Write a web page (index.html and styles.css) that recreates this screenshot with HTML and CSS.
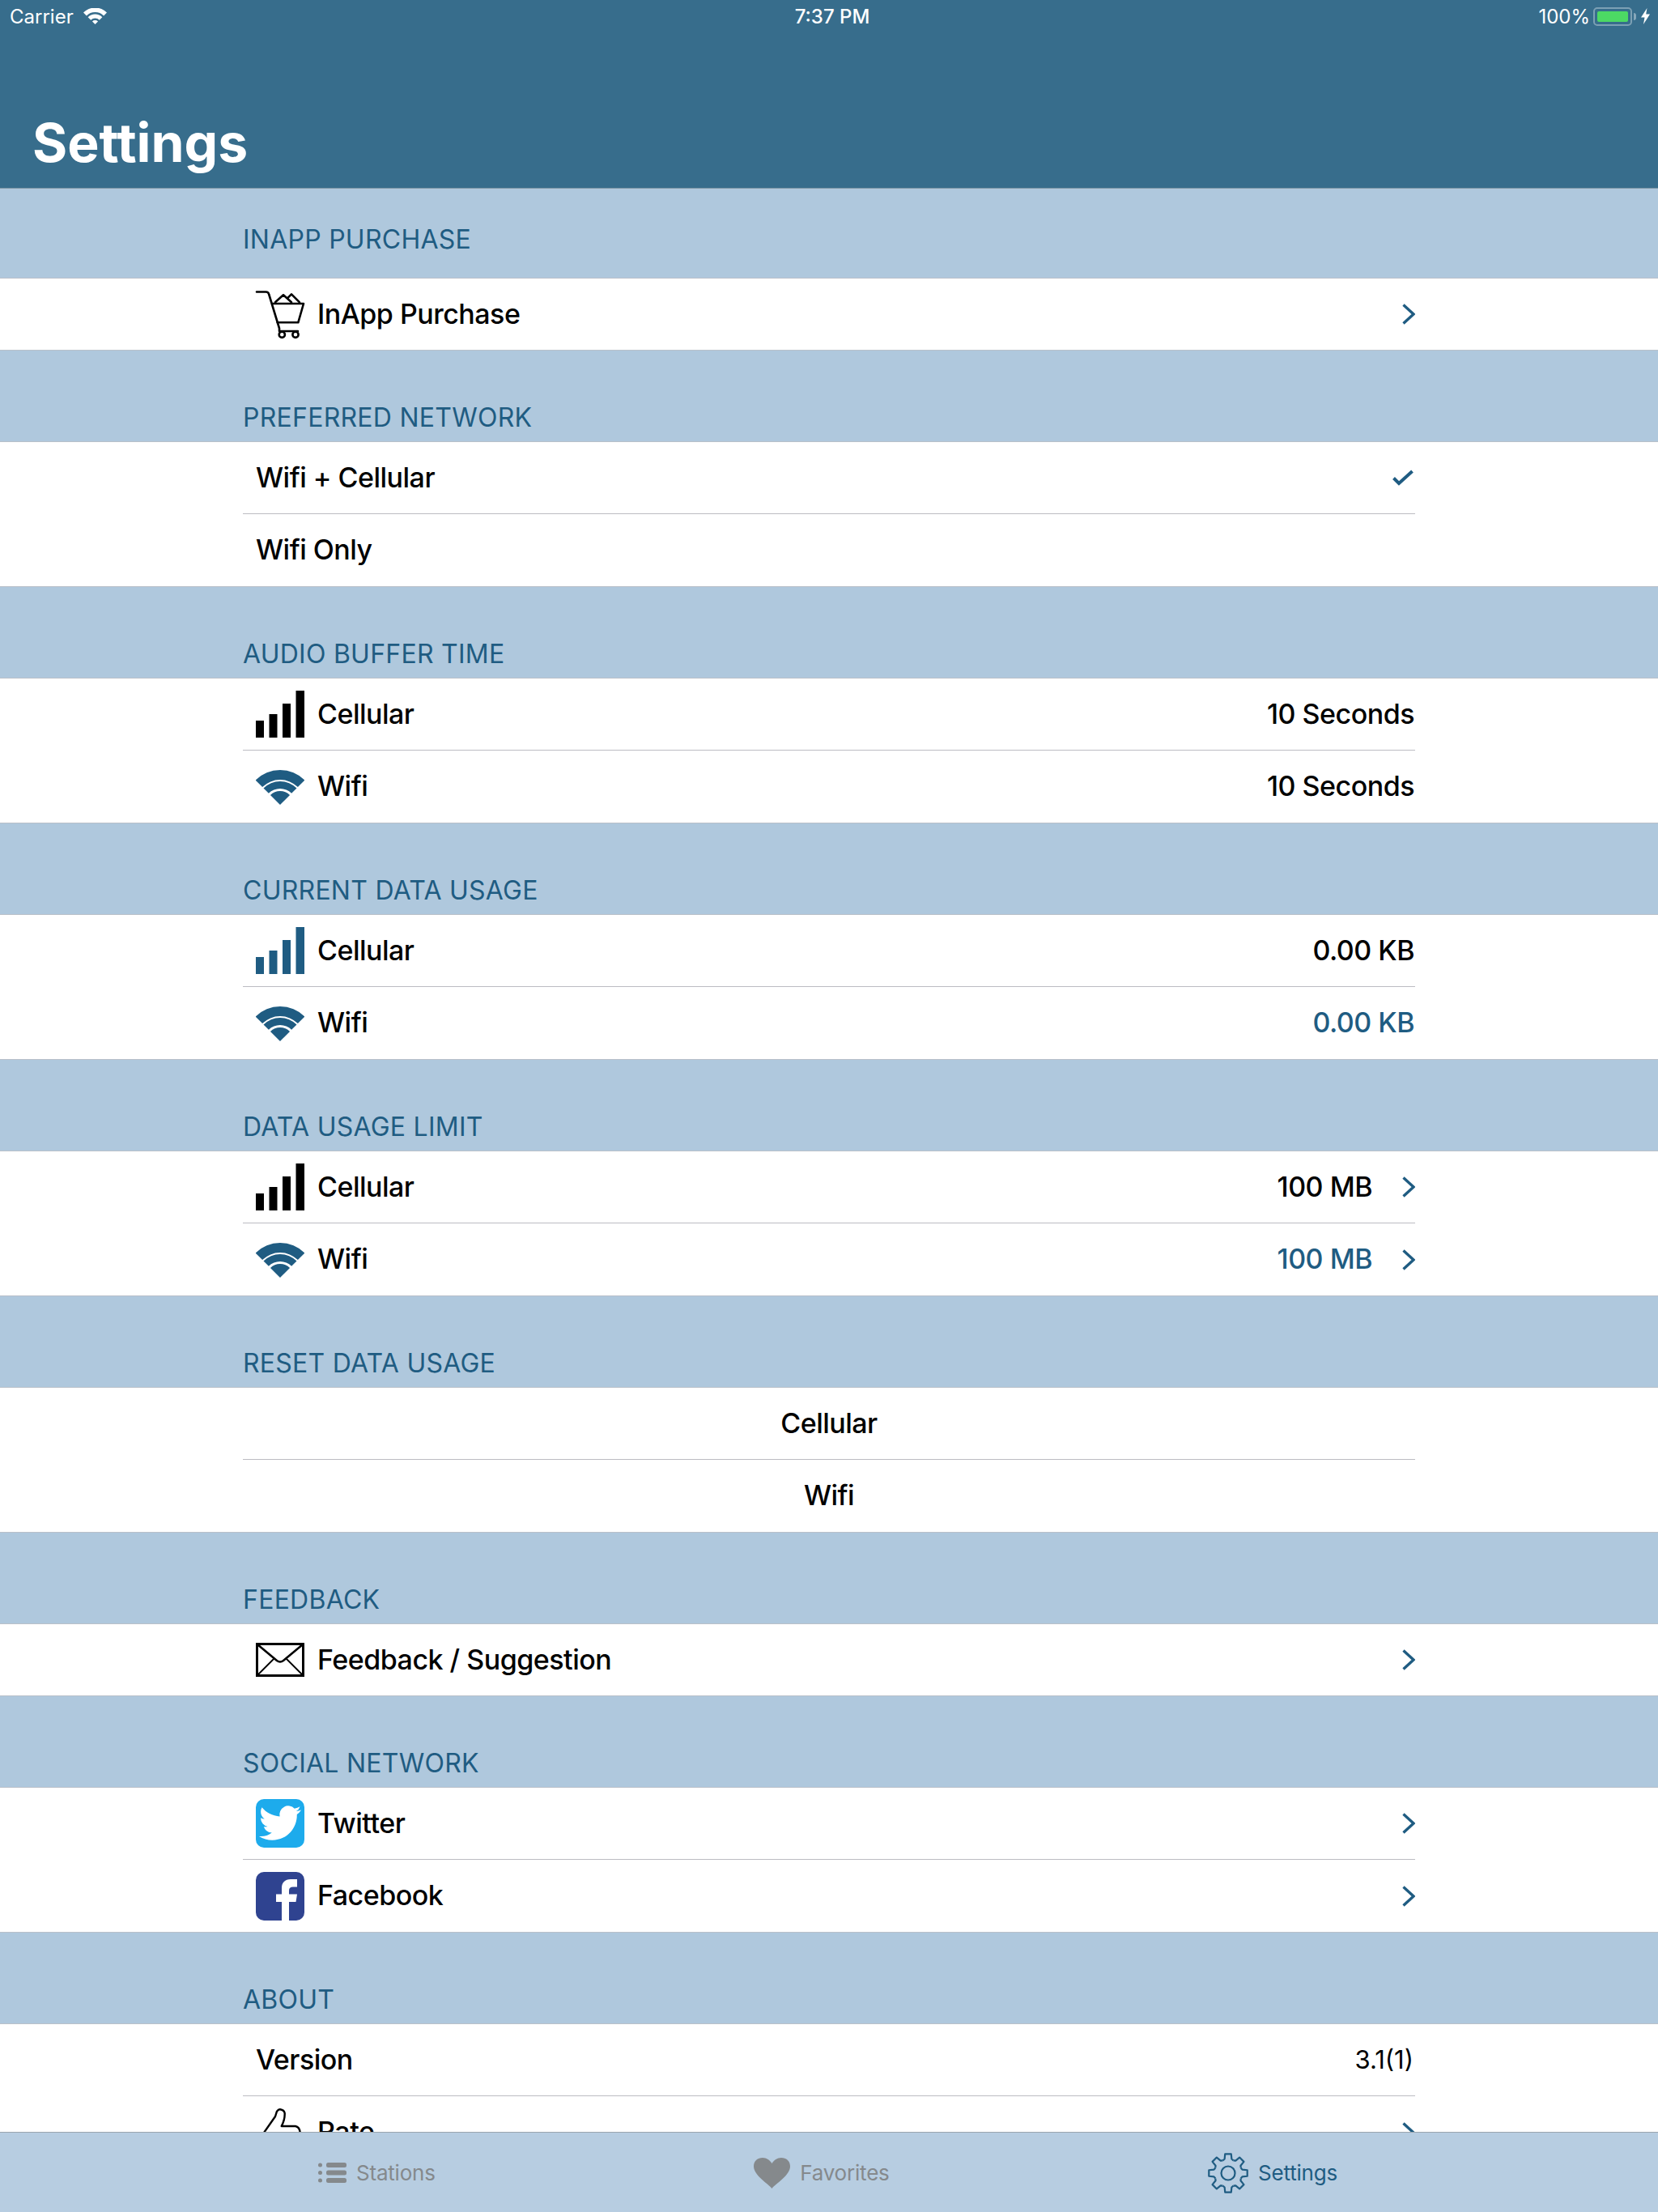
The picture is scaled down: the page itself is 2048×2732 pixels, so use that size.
FILE: index.html
```html
<!DOCTYPE html>
<html lang="en">
<head>
<meta charset="utf-8">
<title>Settings</title>
<link rel="stylesheet" href="styles.css">
</head>
<body>
<svg class="sprite" aria-hidden="true">
  <symbol id="i-chevron" viewBox="0 0 16 26"><path d="M1.5 1.5 L14 13 L1.5 24.5" fill="none" stroke="currentColor" stroke-width="3.4"/></symbol>
  <symbol id="i-bars" viewBox="0 0 60 60"><path fill="currentColor" d="M0 38h10v21H0zM16.5 30h10v29h-10zM33 17h10v42H33zM49.5 1H60v58H49.5z"/></symbol>
  <symbol id="i-wifi" viewBox="0 0 60 60"><path fill="currentColor" d="M-0.4 21.6A43 43 0 0 1 60.4 21.6L51.9 30.1A31 31 0 0 0 8.1 30.1ZM9.5 31.5A29 29 0 0 1 50.5 31.5L44.14 37.86A20 20 0 0 0 15.86 37.86ZM17.98 39.98A17 17 0 0 1 42.02 39.98L30 52Z"/></symbol>
</svg>

<div class="page">
  <header class="topbar">
    <div class="status">
      <div class="status-left">
        <span>Carrier</span>
        <svg class="status-wifi" viewBox="0 0 29 20"><path fill="currentColor" d="M0 5.5A20.5 20.5 0 0 1 29 5.5L25.1 9.4A15 15 0 0 0 3.9 9.4ZM5.66 11.16A12.5 12.5 0 0 1 23.34 11.16L19.8 14.7A7.5 7.5 0 0 0 9.2 14.7ZM10.96 16.46A5 5 0 0 1 18.04 16.46L14.5 20Z"/></svg>
      </div>
      <div class="status-time">7:37 PM</div>
      <div class="status-right">
        <span>100%</span>
        <div class="battery"><div class="battery-fill"></div></div>
        <div class="battery-nub"></div>
        <svg class="bolt" viewBox="0 0 11 20"><path fill="currentColor" d="M7.5 0L0 11.5H4.5L3 20L11 7.5H6.2Z"/></svg>
      </div>
    </div>
    <h1 class="title">Settings</h1>
  </header>

  <main class="content">
    <section>
      <h2 class="head head-first"><span>INAPP PURCHASE</span></h2>
      <div class="group">
        <div class="row">
          <svg class="icon" viewBox="0 0 60 60" fill="none" stroke="#000" stroke-width="2.6" stroke-linejoin="round" stroke-linecap="round">
            <path d="M1 2.5H12.5Q15.5 2.5 16.2 5.5L29 47.5V51H52"/>
            <path d="M20.7 17H59L52.3 40.3H26.7"/>
            <path d="M24 15.3L34 6.3L44 15.3M39 10.3L44 5.3L54 15.3"/>
            <circle cx="32.3" cy="55.3" r="3.6"/><circle cx="49" cy="55.3" r="3.6"/>
          </svg>
          <span class="label">InApp Purchase</span>
          <svg class="chevron"><use href="#i-chevron"/></svg>
        </div>
      </div>
    </section>

    <section>
      <h2 class="head"><span>PREFERRED NETWORK</span></h2>
      <div class="group">
        <div class="row">
          <span class="label">Wifi + Cellular</span>
          <svg class="check" viewBox="0 0 26 20"><path d="M1.5 10.5L8 17L24.5 2" fill="none" stroke="currentColor" stroke-width="4"/></svg>
        </div>
        <div class="row row-last"><span class="label">Wifi Only</span></div>
      </div>
    </section>

    <section>
      <h2 class="head"><span>AUDIO BUFFER TIME</span></h2>
      <div class="group">
        <div class="row">
          <svg class="icon black"><use href="#i-bars"/></svg>
          <span class="label">Cellular</span>
          <span class="value">10 Seconds</span>
        </div>
        <div class="row row-last">
          <svg class="icon teal"><use href="#i-wifi"/></svg>
          <span class="label">Wifi</span>
          <span class="value">10 Seconds</span>
        </div>
      </div>
    </section>

    <section>
      <h2 class="head"><span>CURRENT DATA USAGE</span></h2>
      <div class="group">
        <div class="row">
          <svg class="icon teal"><use href="#i-bars"/></svg>
          <span class="label">Cellular</span>
          <span class="value">0.00 KB</span>
        </div>
        <div class="row row-last">
          <svg class="icon teal"><use href="#i-wifi"/></svg>
          <span class="label">Wifi</span>
          <span class="value teal">0.00 KB</span>
        </div>
      </div>
    </section>

    <section>
      <h2 class="head"><span>DATA USAGE LIMIT</span></h2>
      <div class="group">
        <div class="row">
          <svg class="icon black"><use href="#i-bars"/></svg>
          <span class="label">Cellular</span>
          <span class="value">100 MB</span>
          <svg class="chevron chevron-after"><use href="#i-chevron"/></svg>
        </div>
        <div class="row row-last">
          <svg class="icon teal"><use href="#i-wifi"/></svg>
          <span class="label">Wifi</span>
          <span class="value teal">100 MB</span>
          <svg class="chevron chevron-after"><use href="#i-chevron"/></svg>
        </div>
      </div>
    </section>

    <section>
      <h2 class="head"><span>RESET DATA USAGE</span></h2>
      <div class="group">
        <div class="row row-center"><span class="label">Cellular</span></div>
        <div class="row row-center row-last"><span class="label">Wifi</span></div>
      </div>
    </section>

    <section>
      <h2 class="head"><span>FEEDBACK</span></h2>
      <div class="group">
        <div class="row">
          <svg class="icon" viewBox="0 0 60 60" fill="none" stroke="#000">
            <rect x="1.5" y="10.5" width="57" height="39" stroke-width="3"/>
            <path stroke-width="2.6" d="M2 11L26 31Q30 34 34 31L58 11"/>
            <path stroke-width="1.8" d="M2 49L23 28M58 49L37 28"/>
          </svg>
          <span class="label">Feedback / Suggestion</span>
          <svg class="chevron"><use href="#i-chevron"/></svg>
        </div>
      </div>
    </section>

    <section>
      <h2 class="head"><span>SOCIAL NETWORK</span></h2>
      <div class="group">
        <div class="row">
          <svg class="icon" viewBox="0 0 60 60">
            <rect width="60" height="60" rx="10" fill="#1DABEC"/>
            <path transform="translate(4 3.5) scale(2.17)" fill="#fff" d="M23.953 4.57a10 10 0 01-2.825.775 4.958 4.958 0 002.163-2.723c-.951.555-2.005.959-3.127 1.184a4.92 4.92 0 00-8.384 4.482C7.69 8.095 4.067 6.13 1.64 3.162a4.822 4.822 0 00-.666 2.475c0 1.71.87 3.213 2.188 4.096a4.904 4.904 0 01-2.228-.616v.06a4.923 4.923 0 003.946 4.827 4.996 4.996 0 01-2.212.085 4.936 4.936 0 004.604 3.417 9.867 9.867 0 01-6.102 2.105c-.39 0-.779-.023-1.17-.067a13.995 13.995 0 007.557 2.209c9.053 0 13.998-7.496 13.998-13.985 0-.21 0-.42-.015-.63A9.935 9.935 0 0024 4.59z"/>
          </svg>
          <span class="label">Twitter</span>
          <svg class="chevron"><use href="#i-chevron"/></svg>
        </div>
        <div class="row row-last">
          <svg class="icon" viewBox="0 0 60 60">
            <rect width="60" height="60" rx="10" fill="#2F4390"/>
            <path fill="#fff" d="M32 60V37H25V27.5H32V20C32 13 36 9 43 9H51V18.5H46C42.5 18.5 41 20 41 23V27.5H51L49.5 37H41V60Z"/>
          </svg>
          <span class="label">Facebook</span>
          <svg class="chevron"><use href="#i-chevron"/></svg>
        </div>
      </div>
    </section>

    <section>
      <h2 class="head"><span>ABOUT</span></h2>
      <div class="group">
        <div class="row">
          <span class="label">Version</span>
          <span class="value value-small">3.1(1)</span>
        </div>
        <div class="row row-last">
          <svg class="icon" viewBox="0 0 60 60" fill="none" stroke="#000" stroke-width="2.4" stroke-linejoin="round">
            <path d="M10 30L24 10L26 3.7Q28 1 30 1.3Q35 2 35.7 6Q36 14 31.7 22L49 22Q54 23 54.7 30Q55 35 52 37Q55 42 50 46Q51 51 46 53Q46 58 40 58H22Q14 56 6 52V40Q7 36 10 30Z"/>
          </svg>
          <span class="label">Rate</span>
          <svg class="chevron"><use href="#i-chevron"/></svg>
        </div>
      </div>
    </section>
  </main>

  <nav class="tabbar">
    <div class="tab">
      <svg class="tab-list" viewBox="0 0 35 25"><path fill="currentColor" d="M2.5 0.5a2.5 2.5 0 1 1 0 5a2.5 2.5 0 0 1 0-5zM2.5 10a2.5 2.5 0 1 1 0 5a2.5 2.5 0 0 1 0-5zM2.5 19.5a2.5 2.5 0 1 1 0 5a2.5 2.5 0 0 1 0-5z"/><rect x="10" y="0" width="25" height="6" rx="2.5" fill="currentColor"/><rect x="10" y="9.5" width="25" height="6" rx="2.5" fill="currentColor"/><rect x="10" y="19" width="25" height="6" rx="2.5" fill="currentColor"/></svg>
      <span>Stations</span>
    </div>
    <div class="tab">
      <svg class="tab-heart" viewBox="0 0 45 38"><path fill="currentColor" d="M22.5 38C18 32 0 22 0 10.5C0 4 5 0 11 0C16 0 20 3 22.5 7C25 3 29 0 34 0C40 0 45 4 45 10.5C45 22 27 32 22.5 38Z"/></svg>
      <span>Favorites</span>
    </div>
    <div class="tab tab-active">
      <svg class="tab-gear" viewBox="-25 -25 50 50">
        <defs><path id="gear-seg" d="M-6.5 -15.7L-4.35 -17.5L-3.75 -23.7L3.75 -23.7L4.35 -17.5L6.5 -15.7"/></defs>
        <g fill="none" stroke="currentColor" stroke-width="2.2" stroke-linejoin="round">
          <use href="#gear-seg"/>
          <use href="#gear-seg" transform="rotate(45)"/>
          <use href="#gear-seg" transform="rotate(90)"/>
          <use href="#gear-seg" transform="rotate(135)"/>
          <use href="#gear-seg" transform="rotate(180)"/>
          <use href="#gear-seg" transform="rotate(225)"/>
          <use href="#gear-seg" transform="rotate(270)"/>
          <use href="#gear-seg" transform="rotate(315)"/>
          <circle r="8.5"/>
        </g>
      </svg>
      <span>Settings</span>
    </div>
  </nav>
</div>
</body>
</html>
```
FILE: styles.css
```css
* { box-sizing: border-box; }

html, body {
  margin: 0;
  padding: 0;
}

body {
  font-family: Inter, "Liberation Sans", sans-serif;
  color: #000;
  background: #fff;
}

.sprite {
  display: none;
}

.page {
  width: 2048px;
  height: 2732px;
  display: flex;
  flex-direction: column;
  overflow: hidden;
}

/* Top bar */
.topbar {
  flex: none;
  height: 233px;
  background: #376D8C;
  border-bottom: 1px solid #7d97a6;
  color: #fff;
  display: flex;
  flex-direction: column;
}

.status {
  height: 40px;
  padding: 0 10px 0 12px;
  display: grid;
  grid-template-columns: 1fr auto 1fr;
  align-items: center;
  font-size: 24px;
}

.status-left {
  display: flex;
  align-items: center;
  gap: 12px;
}

.status-wifi {
  width: 29px;
  height: 20px;
  display: block;
}

.status-time {
  font-weight: 500;
  padding-left: 6px;
}

.status-right {
  display: flex;
  align-items: center;
  justify-content: flex-end;
}

.battery {
  width: 48px;
  height: 23px;
  margin-left: 4px;
  padding: 3px;
  border: 2px solid rgba(255, 255, 255, 0.35);
  border-radius: 5px;
}

.battery-fill {
  height: 100%;
  background: #4CD964;
  border-radius: 2px;
}

.battery-nub {
  width: 3px;
  height: 9px;
  margin-left: 2px;
  background: rgba(255, 255, 255, 0.4);
  border-radius: 0 3px 3px 0;
}

.bolt {
  width: 11px;
  height: 20px;
  margin-left: 6px;
  display: block;
}

.title {
  margin: 0;
  padding: 95px 0 0 40px;
  font-size: 66px;
  font-weight: 700;
  line-height: 82px;
}

/* Scrolling list */
.content {
  flex: 1;
  min-height: 0;
  overflow: hidden;
  background: #AFC8DD;
}

.head {
  margin: 0;
  height: 112px;
  padding: 0 300px 9px;
  display: flex;
  align-items: flex-end;
  font-size: 32px;
  font-weight: 400;
  line-height: 40px;
  letter-spacing: 0.25px;
  color: #1F5C82;
}

.head-first {
  height: 110px;
  padding-bottom: 27px;
}

.group {
  background: #fff;
  border-top: 1px solid #b9c0c9;
  border-bottom: 1px solid #b9c0c9;
}

.row {
  height: 89px;
  margin: 0 300px;
  padding: 0 0 0 16px;
  border-bottom: 1px solid #bcbcc2;
  display: flex;
  align-items: center;
  font-size: 34px;
  font-weight: 550;
  letter-spacing: -0.5px;
}

.row-last {
  border-bottom: 0;
}

.row:only-child {
  height: 88px;
  border-bottom: 0;
}

.row-center {
  justify-content: center;
  padding-left: 0;
}

.icon {
  flex: none;
  width: 60px;
  height: 60px;
  margin-right: 16px;
  display: block;
  overflow: visible;
}

.black { color: #000; }
.teal { color: #1F5C82; }

.label {
  flex: none;
  margin-bottom: 2px;
}

.value {
  margin-left: auto;
  margin-bottom: 2px;
  padding-right: 1px;
}

.value-small {
  font-size: 31px;
  font-weight: 400;
  letter-spacing: 0;
  padding-right: 2px;
}

.chevron {
  flex: none;
  width: 16px;
  height: 26px;
  margin-left: auto;
  display: block;
  color: #1F5C82;
}

.chevron-after {
  margin-left: 36px;
}

.check {
  flex: none;
  width: 26px;
  height: 20px;
  margin-left: auto;
  margin-right: 2px;
  display: block;
  color: #1F5C82;
}

/* Tab bar */
.tabbar {
  flex: none;
  height: 99px;
  padding: 0 396px 0 393px;
  background: #B7CDE1;
  border-top: 1px solid #9aa5ae;
  display: flex;
  justify-content: space-between;
  font-size: 26px;
  letter-spacing: -0.2px;
  color: #85898C;
}

.tab {
  display: flex;
  align-items: center;
  gap: 12px;
  padding-top: 1px;
}

.tab-active {
  color: #1F5C82;
}

.tab-list {
  width: 35px;
  height: 25px;
  display: block;
}

.tab-heart {
  width: 45px;
  height: 38px;
  display: block;
}

.tab-gear {
  width: 50px;
  height: 50px;
  display: block;
}
```
